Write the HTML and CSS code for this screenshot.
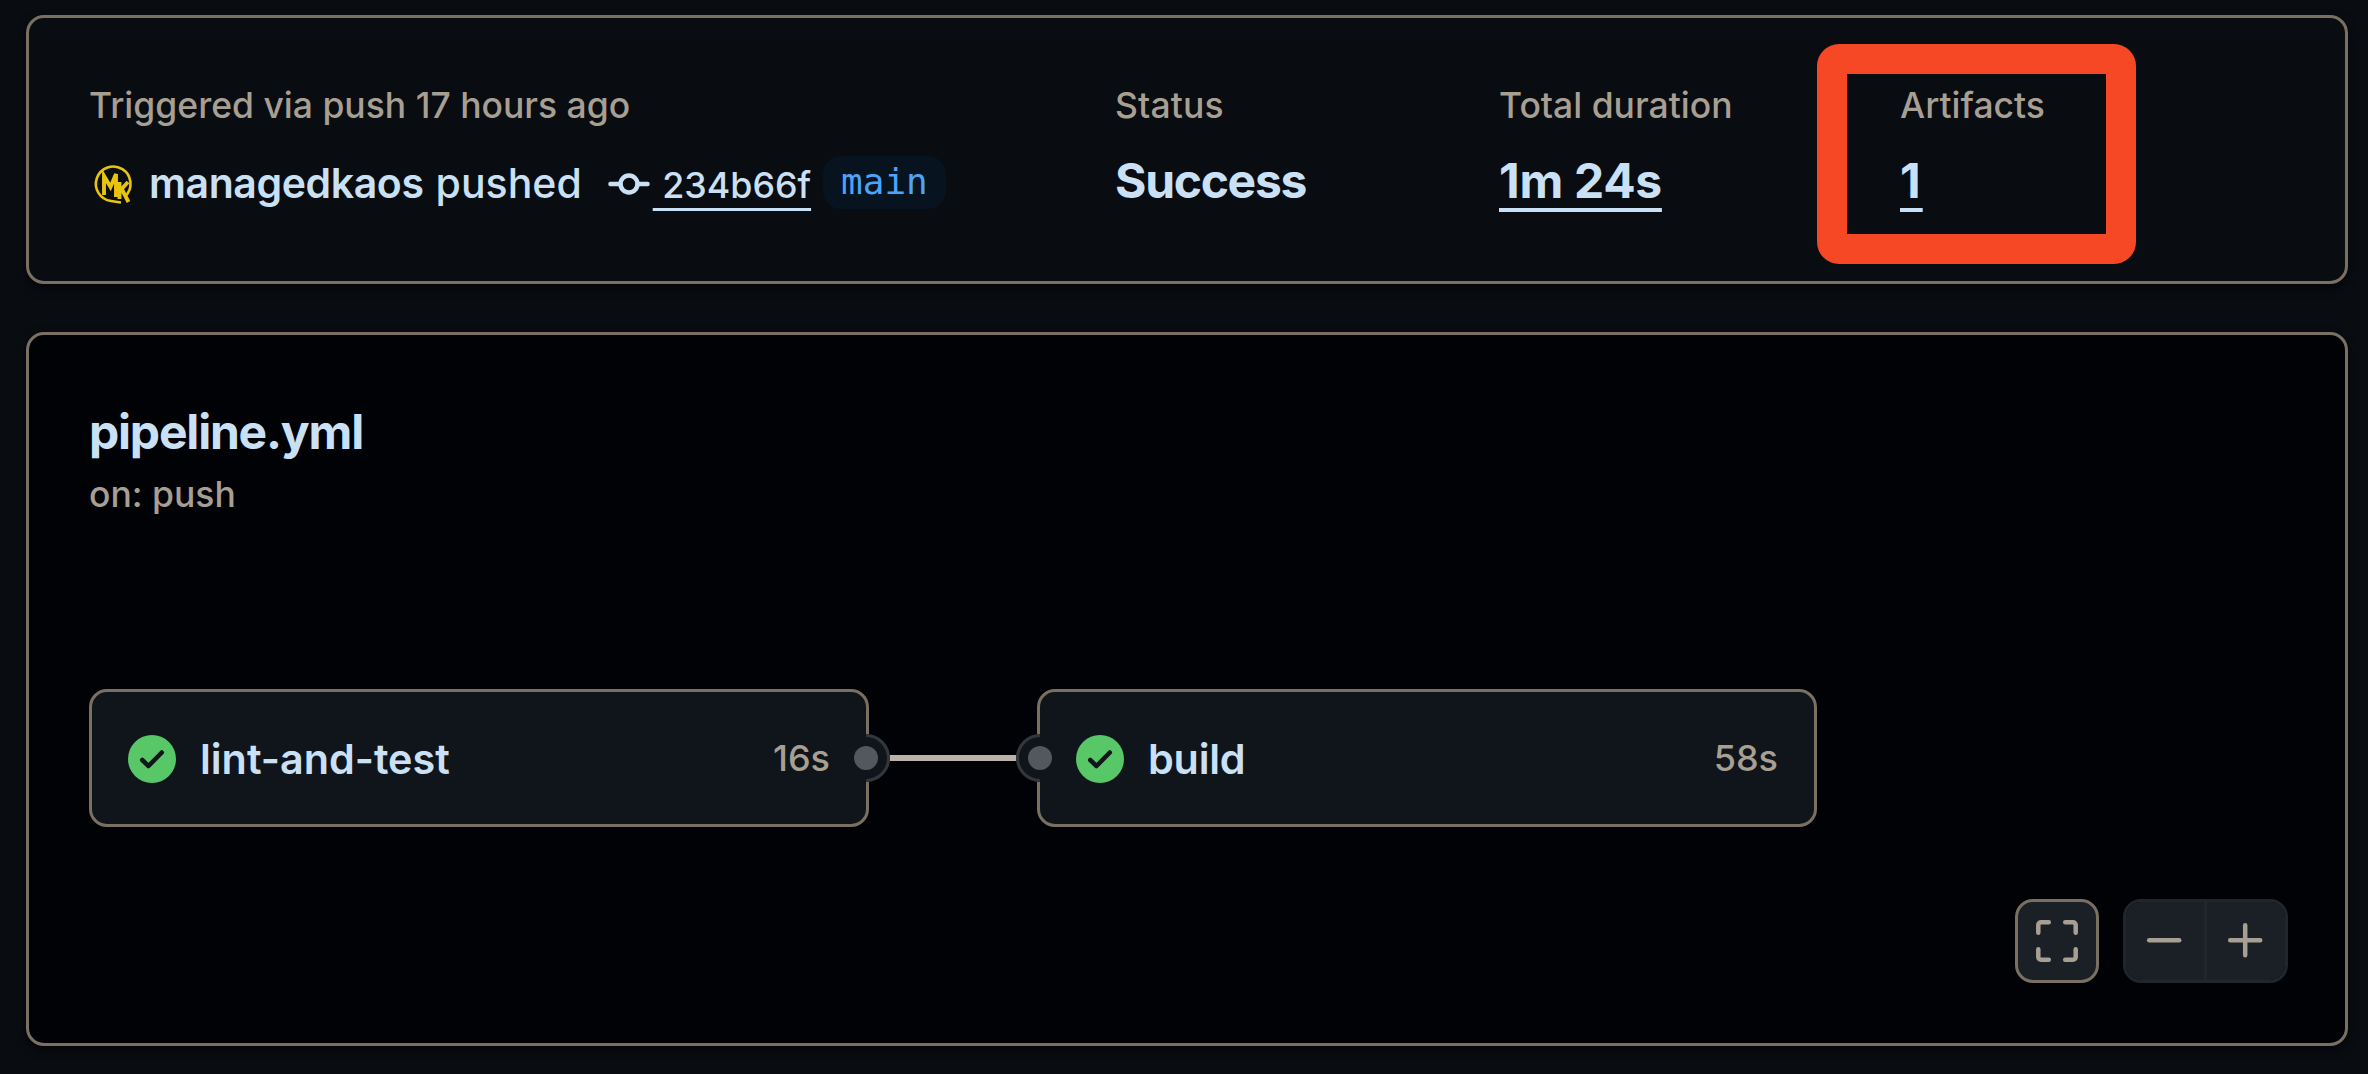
FILE: index.html
```
<!DOCTYPE html>
<html lang="en">
<head>
<meta charset="utf-8">
<title>Workflow run</title>
<link rel="stylesheet" href="styles.css">
</head>
<body>
<main class="page">
  <section class="card summary">
    <div class="cell">
      <div class="label trigger-label">Triggered via push 17 hours ago</div>
      <div class="trigger">
        <svg class="avatar" viewBox="0 0 48 48" fill="none" stroke="#e9c40c">
          <path stroke-width="2.600" d="M36.500 36A17.300 17.300 0 1 0 22 41l10 1.500"/>
          <path stroke-width="3.900" d="M15 35V16l6.500 11L27 14v23M39 22L29 33M33 29.500l6.500 12.500M30.500 22v17"/>
        </svg>
        <span class="actor">managedkaos</span>
        <span class="verb">pushed</span>
        <svg class="commit" viewBox="0 0 42 24" fill="none" stroke="#cae1f5" stroke-width="4.500" stroke-linecap="round"><circle cx="21" cy="12" r="8.500"/><path d="M2.500 12h10M29.500 12h10"/></svg>
        <a class="sha"> 234b66f</a>
        <span class="branch">main</span>
      </div>
    </div>
    <div class="cell">
      <div class="label status-label">Status</div>
      <div class="value status-value">Success</div>
    </div>
    <div class="cell">
      <div class="label duration-label">Total duration</div>
      <div class="value duration-value"><a class="link">1m 24s</a></div>
    </div>
    <div class="cell artifacts">
      <div class="label artifacts-label">Artifacts</div>
      <div class="value"><a class="link count">1</a></div>
      <div class="highlight"></div>
    </div>
  </section>

  <section class="card workflow">
    <h1 class="title">pipeline.yml</h1>
    <div class="label event">on: push</div>
    <div class="graph">
      <div class="job">
        <svg class="check" viewBox="0 0 48 48"><circle cx="24" cy="24" r="24" fill="#57c767"/><path d="M14.200 25l6.300 6L33.800 17.500" fill="none" stroke="#10151b" stroke-width="4.500" stroke-linecap="round" stroke-linejoin="round"/></svg>
        <span class="job-name lint">lint-and-test</span>
        <span class="job-time">16s</span>
        <svg class="port port-out" viewBox="0 0 48 48"><circle cx="24" cy="24" r="24" fill="#10151b"/><path d="M24 1.500a22.500 22.500 0 0 1 0 45" fill="none" stroke="#33373c" stroke-width="3"/><circle cx="24" cy="24" r="12" fill="#52585c"/></svg>
      </div>
      <div class="edge"></div>
      <div class="job">
        <svg class="port port-in" viewBox="0 0 48 48"><circle cx="24" cy="24" r="24" fill="#10151b"/><path d="M24 1.500a22.500 22.500 0 0 0 0 45" fill="none" stroke="#33373c" stroke-width="3"/><circle cx="24" cy="24" r="12" fill="#52585c"/></svg>
        <svg class="check" viewBox="0 0 48 48"><circle cx="24" cy="24" r="24" fill="#57c767"/><path d="M14.200 25l6.300 6L33.800 17.500" fill="none" stroke="#10151b" stroke-width="4.500" stroke-linecap="round" stroke-linejoin="round"/></svg>
        <span class="job-name build">build</span>
        <span class="job-time">58s</span>
      </div>
    </div>
    <div class="controls">
      <button class="btn full" aria-label="Full screen"><svg viewBox="0 0 48 48"><path d="M5.300 15.800V8a2.700 2.700 0 0 1 2.700-2.700h7.800M32.200 5.300H40A2.700 2.700 0 0 1 42.700 8v7.800M42.700 32.200V40a2.700 2.700 0 0 1-2.700 2.700h-7.800M15.800 42.700H8A2.700 2.700 0 0 1 5.300 40v-7.800"/></svg></button>
      <div class="zoom">
        <button class="btn" aria-label="Zoom out"><svg viewBox="0 0 48 48"><path d="M8.200 23.300h30"/></svg></button>
        <button class="btn plus" aria-label="Zoom in"><svg viewBox="0 0 48 48"><path d="M8.200 23.300h30M23.200 8.300v30"/></svg></button>
      </div>
    </div>
  </section>
</main>
</body>
</html>
```
FILE: styles.css
```
* { box-sizing: border-box; }
body {
  margin: 0;
  background: #090c11;
  font-family: Inter, "Liberation Sans", sans-serif;
  color: #cae1f5;
}
.page {
  display: flex;
  flex-direction: column;
  gap: 48px;
  height: 1074px;
  padding: 15px 20px 28px 26px;
}
.card {
  border: 3px solid #7a7062;
  border-radius: 18px;
  box-shadow: 0 4px 10px rgba(1, 2, 5, .6);
}
.summary {
  display: grid;
  grid-template-columns: 1026px 384px 401px 1fr;
  height: 269px;
  padding: 61px 0 0 60px;
  background: #090c11;
}
.label {
  font-size: 35.5px;
  font-weight: 450;
  line-height: 54px;
  color: #a89f93;
  white-space: nowrap;
}
.status-label { letter-spacing: 0.15px; }
.value {
  margin-top: 12px;
  font-size: 48px;
  font-weight: 650;
  line-height: 72px;
  letter-spacing: -0.3px;
}
.status-value { letter-spacing: -1.3px; }
.link {
  text-decoration: underline;
  text-decoration-thickness: 4px;
  text-underline-offset: 10px;
  text-decoration-skip-ink: none;
}
.count { letter-spacing: 2px; }
.trigger {
  display: flex;
  align-items: center;
  margin-top: 13px;
  height: 76px;
  font-size: 41px;
  line-height: 70px;
}
.avatar { width: 48px; height: 48px; margin-right: 12px; }
.actor { font-weight: 600; letter-spacing: -0.4px; margin: 0 12px 2px 0; }
.verb { font-weight: 450; margin: 0 26px 2px 0; }
.commit { width: 42px; height: 24px; margin-right: 3px; }
.sha {
  white-space: pre;
  font-size: 35.8px;
  font-weight: 450;
  padding-top: 2px;
  text-decoration: underline;
  text-decoration-thickness: 3px;
  text-underline-offset: 10px;
  text-decoration-skip-ink: none;
}
.branch {
  margin: 0 0 3px 12px;
  padding: 0 18px;
  height: 53px;
  border-radius: 18px;
  background: #07131f;
  color: #4ba4f8;
  font: 36px/51px "DejaVu Sans Mono", monospace;
}
.artifacts { position: relative; }
.highlight {
  position: absolute;
  left: -83px;
  top: -35px;
  width: 319px;
  height: 220px;
  border: 30px solid #f64825;
  border-radius: 22px;
}
.workflow {
  height: 714px;
  padding: 61px 57px 60px 60px;
  background: #010206;
}
.title {
  margin: 0;
  font-size: 48px;
  font-weight: 650;
  letter-spacing: -1.2px;
  line-height: 72px;
}
.graph {
  display: flex;
  align-items: center;
  margin-top: 167px;
}
.job {
  position: relative;
  display: flex;
  align-items: center;
  width: 780px;
  height: 138px;
  padding: 0 36px;
  border: 3px solid #7a7062;
  border-radius: 18px;
  background: #10151b;
}
.check { width: 48px; height: 48px; margin: 2px 24px 0 0; }
.job-name { font-size: 41.3px; font-weight: 600; padding-top: 1px; }
.build { letter-spacing: -0.2px; }
.job-time { margin-left: auto; font-size: 36px; font-weight: 450; color: #a89f93; }
.port { position: absolute; top: 42px; width: 48px; height: 48px; }
.port-out { right: -24px; }
.port-in { left: -24px; }
.edge { width: 168px; height: 6px; background: #bab2a9; }
.controls {
  display: flex;
  justify-content: flex-end;
  gap: 24px;
  margin-top: 72px;
}
.btn {
  display: flex;
  align-items: center;
  justify-content: center;
  width: 78px;
  height: 78px;
  padding: 0;
  border: 0;
  background: #1b2027;
}
.btn svg {
  width: 48px;
  height: 48px;
  fill: none;
  stroke: #a89f93;
  stroke-width: 4.5;
  stroke-linecap: round;
}
.full { width: 84px; height: 84px; border: 3px solid #7a7062; border-radius: 18px; }
.zoom {
  display: flex;
  width: 165px;
  height: 84px;
  border: 3px solid #20262b;
  border-radius: 18px;
  overflow: hidden;
}
.plus { width: 81px; border-left: 3px solid #20262b; }
```
